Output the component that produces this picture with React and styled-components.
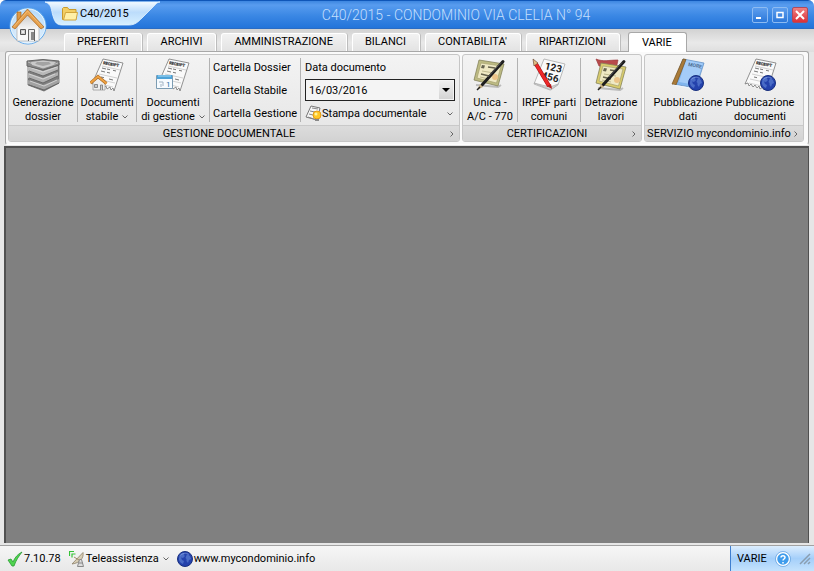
import { useState } from "react";
import styled, { createGlobalStyle, css } from "styled-components";

const GlobalStyle = createGlobalStyle`
    *, *::before, *::after {
        box-sizing: border-box;
    }

    body {
        margin: 0;
        color: #000;
        font: 11px/14px Roboto, Tahoma, sans-serif;
    }

    button, input {
        margin: 0;
        padding: 0;
        border: 0;
        background: none;
        color: inherit;
        font: inherit;
    }

    svg {
        display: block;
        flex: none;
    }
`;

const Window = styled.div`
    position: relative;
    display: flex;
    flex-direction: column;
    min-height: 100vh;
    border-radius: 6px 6px 0 0;
    background: #e6e6e6;
    overflow: hidden;
`;

/* title bar */

const TitleBar = styled.header`
    display: flex;
    height: 29px;
    padding: 0 6px 0 45px;
    border-top: 1px solid #0f56b8;
    border-bottom: 1px solid #2a6cc4;
    background: linear-gradient(#3d86e0, #589cef 15%, #3a87e4 55%, #2374da);
`;

const HomeButton = styled.button`
    position: absolute;
    top: 7px;
    left: 9px;
    z-index: 1;
    width: 38px;
    height: 38px;
`;

const QuickTab = styled.div`
    display: grid;
    width: 115px;
    height: 25px;

    > * {
        grid-area: 1 / 1;
    }
`;

const QuickButton = styled.button`
    display: flex;
    align-items: center;
    gap: 2px;
    padding-left: 17px;
`;

const WindowTitle = styled.h1`
    flex: 1;
    margin: 0;
    color: #c4dffd;
    font-size: 14px;
    font-weight: 300;
    line-height: 28px;
    text-align: center;
`;

const WindowButtons = styled.div`
    display: flex;
    align-items: center;
    gap: 4px;
`;

const WindowButton = styled.button`
    display: grid;
    place-items: center;
    width: 16px;
    height: 16px;
    border: 1px solid ${({ $close }) => ($close ? "#b04a5c" : "#8dbbf2")};
    border-radius: 2px;
    background: ${({ $close }) =>
        $close ? "linear-gradient(#f08080, #dc3038)" : "linear-gradient(#5d9eee, #2c78da)"};
`;

/* tabs */

const Tabs = styled.nav`
    display: flex;
    align-items: flex-end;
    gap: 5px;
    height: 23px;
    padding-left: 64px;
    background: linear-gradient(#d2d2d2, #e9e9e9 60%, #dedede);
`;

const Tab = styled.button`
    height: 19px;
    padding: 0 13px 2px 12px;
    border: 1px solid #fff;
    border-bottom: 0;
    border-radius: 3px 3px 0 0;
    background: linear-gradient(#f2f2f2, #e2e2e2);
    box-shadow: 1px 0 0 #bdbdbd;
    line-height: 16px;
    white-space: nowrap;

    ${({ $active }) =>
        $active &&
        css`
            z-index: 1;
            height: 20px;
            margin-left: 3px;
            padding: 0 14px 0 13px;
            border: 1px solid #a8a8a8;
            border-bottom: 0;
            background: #fff;
            box-shadow: none;
            line-height: 19px;
        `}
`;

/* ribbon */

const Ribbon = styled.section`
    display: flex;
    gap: 2px;
    margin: -1px 5px 1px;
    padding: 2px;
    border: 1px solid #a8a8a8;
    border-bottom-color: #fff;
    border-radius: 3px;
    background: #fafafa;
`;

const Group = styled.div`
    display: flex;
    flex-direction: column;
    border: 1px solid #c6c6c6;
    border-radius: 3px;
    background: linear-gradient(#f3f3f3, #e5e5e5);
    overflow: hidden;
`;

const GroupBody = styled.div`
    display: flex;
    height: 70px;
    padding: ${({ $inset }) => ($inset ? "0 7px" : "0")};
`;

const GroupTitle = styled.div`
    display: flex;
    align-items: center;
    height: 16px;
    padding: 0 2px;
    border-top: 1px solid #c9c9c9;
    background: linear-gradient(#dcdcdc, #d2d2d2);

    span {
        flex: 1;
        text-align: center;
        white-space: nowrap;
    }
`;

const MoreButton = styled.button`
    display: grid;
    place-items: center;
    width: 10px;
    height: 14px;
`;

const Divider = styled.div`
    width: 1px;
    margin: 3px 0;
    background: #b2b2b2;
`;

const LargeButton = styled.button`
    display: flex;
    flex-direction: column;
    align-items: center;
    gap: 4px;
    width: ${({ $width }) => $width}px;
    padding-top: 3px;
    white-space: nowrap;
`;

const Line = styled.span`
    display: flex;
    align-items: center;
    gap: 4px;
`;

const Labels = styled.div`
    display: flex;
    flex-direction: column;
    align-items: center;
`;

const Column = styled.div`
    display: flex;
    flex-direction: column;
    width: ${({ $width }) => $width}px;
    padding: 1px 4px 0 ${({ $pad }) => $pad || 3}px;
    line-height: 23px;
    white-space: nowrap;
`;

const LinkButton = styled.button`
    height: 23px;
    text-align: left;
`;

const Combo = styled.div`
    display: flex;
    height: 22px;
    margin-bottom: 1px;
    padding: 1px;
    border: 1px solid #222;
    background: #f4f4f4;

    input {
        flex: 1;
        min-width: 0;
        padding-left: 2px;
        outline: none;
    }

    button {
        display: grid;
        place-items: center;
        width: 14px;
        background: linear-gradient(#f0f0f0, #d4d4d4);
    }
`;

const PrintButton = styled.button`
    display: flex;
    align-items: center;
    height: 23px;
    padding-right: 2px;

    span {
        flex: 1;
        text-align: left;
    }
`;

/* work area and status bar */

const Workspace = styled.main`
    flex: 1;
    margin: 0 5px 0 4px;
    border: 1px solid #505050;
    border-width: 2px 1px 0 2px;
    background: #808080;
`;

const StatusBar = styled.footer`
    display: flex;
    height: 26px;
    margin-top: 2px;
    border-top: 1px solid #a2a2a2;
    background: linear-gradient(#f6f6f6, #e8e8e8);
`;

const StatusItems = styled.div`
    display: flex;
    flex: 1;
    align-items: center;
    gap: 8px;
    padding-left: 7px;
`;

const StatusItem = styled.button`
    display: flex;
    align-items: center;
    gap: 1px;
`;

const StatusLink = styled.a`
    display: flex;
    align-items: center;
    gap: 1px;
    color: inherit;
    text-decoration: none;
`;

const StatusPane = styled.div`
    display: flex;
    align-items: center;
    gap: 8px;
    width: 84px;
    padding-left: 6px;
    border-left: 1px solid #3f7fd0;
    background: linear-gradient(#ddeefe, #a4cffa 50%, #c4e2fd);
`;

/* icons */

const Chevron = ({ right }) => (
    <svg width="6" height="6" viewBox="0 0 6 6" fill="none" stroke="#666">
        <path d={right ? "M1.500 .5L4 3 1.500 5.500" : "M.5 1.500L3 4 5.500 1.500"} />
    </svg>
);

const HomeIcon = () => (
    <svg width="38" height="38" viewBox="0 0 38 38">
        <defs>
            <radialGradient id="orb" cx=".5" cy=".7" r=".6">
                <stop offset="0" stopColor="#fff" />
                <stop offset="1" stopColor="#b9dcfa" />
            </radialGradient>
            <linearGradient id="wall" x2="0" y2="1">
                <stop offset="0" stopColor="#c8c8c8" />
                <stop offset=".6" stopColor="#fafafa" />
            </linearGradient>
        </defs>
        <circle cx="19" cy="19" r="18" fill="url(#orb)" stroke="#5aa5ea" />
        <circle cx="19" cy="19" r="17" fill="none" stroke="#e8f5ff" />
        <path d="M8 17L18 7 30 18V34H8z" fill="url(#wall)" stroke="#aaa" strokeWidth=".7" />
        <path d="M8 5h4v8l-4 4z" fill="#dc9945" stroke="#a7641c" strokeWidth=".7" />
        <path d="M3 20L18.500 2 35 20l-3 2L18.500 8 6 22z" fill="#e6a04c" stroke="#a7641c" strokeWidth=".7" />
        <path d="M5 19.500L18.500 4 33 19.500" fill="none" stroke="#f5c27c" strokeWidth=".8" />
        <path d="M11.500 22.500h5v5h-5z" fill="#ccc" stroke="#555" />
        <path d="M13 24h2v2h-2z" fill="#eee" />
        <path d="M19.500 34V22.500h6V34" fill="#eee" stroke="#666" />
        <path d="M22 25h3v8h-3z" fill="#888" />
    </svg>
);

const TabShape = () => (
    <svg width="115" height="25" viewBox="0 0 115 25">
        <defs>
            <linearGradient id="tabFill" x2="0" y2="1">
                <stop offset="0" stopColor="#f2f9ff" />
                <stop offset=".45" stopColor="#bcdcfb" />
                <stop offset="1" stopColor="#d6f0ff" />
            </linearGradient>
        </defs>
        <path d="M0 1C7 3 6 9 8 15C10 22 12 24 18 24H84C90 24 93 21 97 17L108 6C111 3 112 1 115 1z" fill="url(#tabFill)" stroke="#e4f4ff" strokeWidth=".8" />
    </svg>
);

const FolderIcon = () => (
    <svg width="16" height="14" viewBox="0 0 16 14">
        <path d="M.5 12.500v-11l1-1h4l1.500 2h7v10z" fill="#f3cf63" stroke="#c99a2c" />
        <path d="M3.500 5.500h12l-1.500 7.500H1.500z" fill="#fff0a6" stroke="#d2a63c" />
    </svg>
);

const StackIcon = () => (
    <svg width="34" height="34" viewBox="0 0 34 34" strokeLinejoin="round">
        <path d="M2 6l15 5 16-6v20l-15 8L2 27z" fill="#7d7d7d" stroke="#696969" strokeWidth=".8" />
        <path d="M2 22l15 5 16-6v4l-15 7-16-6z" fill="#a2a2a2" />
        <path d="M2 15l15 5 15-6v4l-15 7-15-5z" fill="#b0b0b0" />
        <path d="M2 8l15 5 15-5v4l-15 6-15-5z" fill="#b8b8b8" />
        <path d="M3 20l14 5 15-7M3 27l15 5 15-7M3 13l14 5 15-6" fill="none" stroke="#686868" />
        <path d="M3 16l14 5 12-5M3 9l14 5 14-5M4 23l14 5 13-6" fill="none" stroke="#ddd" strokeWidth=".8" />
        <path d="M1 3l16-1.500L33 3v4l-16 5L1 8z" fill="#888" stroke="#666" />
        <path d="M5 4l12-1.500L30 4l-3 3-10 3L6 7z" fill="#c9c9c9" />
        <path d="M11 4h12l2 2-8 2-8-2z" fill="#a3a3a3" />
        <path d="M2 4l15 6 15-5" fill="none" stroke="#ccc" strokeWidth=".8" />
    </svg>
);

const Globe = () => (
    <>
        <circle cx="8" cy="8" r="7.500" fill="#2442ac" stroke="#19307f" />
        <path d="M2.500 4.500c1-2 3-3 5-2L7 4l1 1-2 2-2-.5L5 9l2 1-1 3C3 12 1.500 9 2 7zM10 3l3 2 1 3-2 1-1 3-1.500-2V8L8.500 7z" fill="#4a6cc6" />
        <path d="M3.500 4.500c2-2.500 6-3 8.500-1" fill="none" stroke="#b5cbf5" opacity=".4" />
    </>
);

const Receipt = () => (
    <>
        <path d="M13 1l20 4-9 28-1-3-2 2-1-3-3 2-1-3-2 2-2-3-2 2-2-3-2 2-1-3-3 1z" fill="#fafafa" stroke="#777" strokeWidth=".8" />
        <text x="13" y="6" transform="rotate(11 13 6)" fontSize="4" fontWeight="700" fill="#333" stroke="#333" strokeWidth=".2">RECEIPT</text>
        <path d="M12 10l4 1m1 0l3 .7m3 .6l3 .7M11 13l4 1m2 .3l3 .7m-1 6l4 1m-12-3l3 .7" fill="none" stroke="#777" />
        <path d="M12 8l18 4M9 16l18 4M7 21l18 4M6 25l17 4" stroke="#b5b5b5" strokeWidth=".6" />
    </>
);

const ReceiptIcon = ({ badge }) => (
    <svg width="34" height="34" viewBox="0 0 34 34">
        <Receipt />
        {badge === "home" && (
            <>
                <path d="M3 24l5-5 7 5v8H3z" fill="#eee" stroke="#999" strokeWidth=".8" />
                <path d="M.5 25L8 18.500 16.500 25.500" fill="none" stroke="#a9651e" strokeWidth="3" />
                <path d="M.5 25L8 18.500 16.500 25.500" fill="none" stroke="#eda142" strokeWidth="2" />
                <path d="M4.500 26.500h3v3h-3zM10.500 32v-5h2v5" fill="#ccc" stroke="#777" strokeWidth=".8" />
            </>
        )}
        {badge === "calendar" && (
            <>
                <path d="M.5 17.500h16v13H.5z" fill="#f6fbff" stroke="#7c9cb2" />
                <path d="M1 17h15v4H1z" fill="#4ea3d8" />
                <path d="M2 18h13" stroke="#a9dbf6" />
                <path d="M3 24h4v4M5 26v3" fill="none" stroke="#9fb2c2" />
                <text x="10" y="29" fontSize="8" fill="#286fa6">1</text>
            </>
        )}
        {badge === "globe" && (
            <g transform="translate(17 17)">
                <Globe />
            </g>
        )}
    </svg>
);

const CertificateIcon = ({ stamp }) => (
    <svg width="34" height="34" viewBox="0 0 34 34">
        {stamp && <path d="M2 1c7 3 13 1 22 1l-2 9L5 8z" fill="#b84a4c" stroke="#9c3c3f" strokeWidth=".7" />}
        <g transform={stamp ? "translate(1 3)" : undefined}>
            <path d="M3 27l22 2 3-2" fill="none" stroke="#888" opacity=".5" strokeWidth="2" />
            <path d="M6 2l25 4-6 22L1 22z" fill={stamp ? "#d9cc6c" : "#bdbb83"} stroke="#85835a" strokeWidth=".8" />
            <path d="M8 5l20 3-4.500 17L4 20z" fill="#efe9c4" stroke="#a5a070" strokeWidth=".7" />
            <path d="M9 7l3 .5-1 3-3-.5z" fill="#666450" />
            <path d="M15 9l7 1M8 16l8 2" stroke="#66634d" strokeWidth="1.500" />
            <path d="M9 13l12 2M7 19l9 2" stroke="#b2ac80" strokeWidth=".8" />
            <circle cx="22" cy="19" r="3" fill="#ecc489" />
        </g>
        <path d="M9 27L30 3.500" stroke="#1d1d1d" strokeWidth="3" strokeLinecap="round" />
        <path d="M15 19L28 4.500" stroke="#666" strokeWidth=".8" />
        <path d="M4 32l3-6 3 3z" fill="#c7b083" />
        <path d="M4 32l3-3" stroke="#222" strokeWidth="1.500" />
    </svg>
);

const NumbersIcon = () => (
    <svg width="34" height="34" viewBox="0 0 34 34">
        <path d="M12 1l21 5-7 21-8 5L2 26z" fill="#fafafa" stroke="#aaa" strokeWidth=".8" />
        <path d="M2 25l16 4 8-3-7 6z" fill="#d5d5d5" stroke="#aaa" strokeWidth=".7" />
        <g transform="rotate(13 12 12)" fontSize="10" fontWeight="700" fill="#222">
            <text x="12" y="11">123</text>
            <text x="11" y="21">456</text>
        </g>
        <path d="M4 6L17 28" stroke="#a00b10" strokeWidth="4" />
        <path d="M4 6L17 28" stroke="#ed2929" strokeWidth="3" />
        <path d="M1 1l5 4-4 3z" fill="#e5bd84" stroke="#5b3a24" strokeWidth=".6" />
        <path d="M15 28l4-2 1 5z" fill="#b51a1a" />
    </svg>
);

const NotebookIcon = () => (
    <svg width="34" height="34" viewBox="0 0 34 34">
        <path d="M12 1l21 4-8 25-23-4z" fill="#81b5ed" stroke="#6a96c8" strokeWidth=".8" />
        <path d="M15 2l17 3.500-7 21.500-17-3z" fill="#a4ccf8" />
        <path d="M12 1l3 .5L5 27l-4-1z" fill="#a97a38" stroke="#79521d" strokeWidth=".7" />
        <path d="M2 27l22 4 3-3" fill="none" stroke="#eef6ff" />
        <text x="17" y="8" transform="rotate(10 17 8)" fontSize="5" fontWeight="700" fill="#4f6f94">MORE</text>
        <g transform="translate(17 17)">
            <Globe />
        </g>
    </svg>
);

const PrintIcon = () => (
    <svg width="17" height="17" viewBox="0 0 17 17">
        <path d="M6 1l9 2-3 12-11-3z" fill="#f7f7f7" stroke="#777" />
        <path d="M7 3l6 1M5 6l5 1M4 9l4 1M3 12l6 2" stroke="#888" />
        <circle cx="12" cy="10" r="4" fill="#ffc928" stroke="#e49a16" />
        <circle cx="11" cy="9" r="1.500" fill="#fff2a0" />
        <path d="M10 15h4" stroke="#888" strokeWidth="2" />
    </svg>
);

const CheckIcon = () => (
    <svg width="16" height="16" viewBox="0 0 16 16">
        <path d="M1 9l3-1 2 3c2-5 5-8 9-10-3 4-6 8-8 14H5z" fill="#4fd44f" stroke="#2a9a34" strokeWidth=".8" />
    </svg>
);

const AntennaIcon = () => (
    <svg width="16" height="16" viewBox="0 0 16 16" fill="none">
        <path d="M.5 5V.5H5M3 6.500V3h3.500" stroke="#36c338" strokeWidth="1.200" />
        <path d="M14 1.500C15 7 11 12 3 13z" fill="#d8cdb4" stroke="#8b806a" strokeWidth=".8" />
        <path d="M5 6l5 3" stroke="#a08d66" />
        <path d="M8.500 15.500l2-7h2l2 7zM10 12h4" fill="#ddd" stroke="#888" />
    </svg>
);

const HelpIcon = () => (
    <svg width="16" height="16" viewBox="0 0 16 16">
        <circle cx="8" cy="8" r="6.500" fill="#3f9cec" stroke="#fff" strokeWidth="1.500" />
        <circle cx="8" cy="8" r="7.500" fill="none" stroke="#5a9bdc" strokeWidth=".7" />
        <path d="M6 6.500c0-2.500 4-2.500 4 0 0 1.500-2 1.500-2 3M8 11v1.500" fill="none" stroke="#fff" strokeWidth="1.500" />
    </svg>
);

const TABS = ["PREFERITI", "ARCHIVI", "AMMINISTRAZIONE", "BILANCI", "CONTABILITA'", "RIPARTIZIONI", "VARIE"];

const RibbonButton = ({ icon, lines, menu, width }) => (
    <LargeButton $width={width}>
        {icon}
        <Labels>
            <Line>{lines[0]}</Line>
            <Line>
                {lines[1]}
                {menu && <Chevron />}
            </Line>
        </Labels>
    </LargeButton>
);

const RibbonGroup = ({ title, inset, children }) => (
    <Group>
        <GroupBody $inset={inset}>{children}</GroupBody>
        <GroupTitle>
            <span>{title}</span>
            <MoreButton aria-label={title}><Chevron right /></MoreButton>
        </GroupTitle>
    </Group>
);

export default function App() {
    const [tab, setTab] = useState("VARIE");
    const [date, setDate] = useState("16/03/2016");

    return (
        <Window>
            <GlobalStyle />
            <HomeButton aria-label="Menu"><HomeIcon /></HomeButton>
            <TitleBar>
                <QuickTab>
                    <TabShape />
                    <QuickButton><FolderIcon />C40/2015</QuickButton>
                </QuickTab>
                <WindowTitle>C40/2015 - CONDOMINIO VIA CLELIA N° 94</WindowTitle>
                <WindowButtons>
                    <WindowButton aria-label="Riduci">
                        <svg width="10" height="10"><path d="M1 8h5" stroke="#fff" strokeWidth="2" /></svg>
                    </WindowButton>
                    <WindowButton aria-label="Ingrandisci">
                        <svg width="8" height="8"><path d="M1 1.500h6v5H1z" fill="none" stroke="#fff" strokeWidth="1.500" /></svg>
                    </WindowButton>
                    <WindowButton $close aria-label="Chiudi">
                        <svg width="10" height="10"><path d="M1 1l8 8M9 1L1 9" stroke="#fff" strokeWidth="2" /></svg>
                    </WindowButton>
                </WindowButtons>
            </TitleBar>
            <Tabs>
                {TABS.map(name => (
                    <Tab key={name} $active={name === tab} onClick={() => setTab(name)}>{name}</Tab>
                ))}
            </Tabs>
            <Ribbon>
                <RibbonGroup title="GESTIONE DOCUMENTALE">
                    <RibbonButton width={68} icon={<StackIcon />} lines={["Generazione", "dossier"]} />
                    <Divider />
                    <RibbonButton width={58} icon={<ReceiptIcon badge="home" />} lines={["Documenti", "stabile"]} menu />
                    <Divider />
                    <RibbonButton width={72} icon={<ReceiptIcon badge="calendar" />} lines={["Documenti", "di gestione"]} menu />
                    <Divider />
                    <Column $width={90}>
                        <LinkButton>Cartella Dossier</LinkButton>
                        <LinkButton>Cartella Stabile</LinkButton>
                        <LinkButton>Cartella Gestione</LinkButton>
                    </Column>
                    <Divider />
                    <Column $width={158} $pad={4}>
                        <label htmlFor="date">Data documento</label>
                        <Combo>
                            <input id="date" value={date} onChange={e => setDate(e.target.value)} />
                            <button aria-label="Scegli data">
                                <svg width="8" height="4"><path d="M0 0h8L4 4z" /></svg>
                            </button>
                        </Combo>
                        <PrintButton><PrintIcon /><span>Stampa documentale</span><Chevron /></PrintButton>
                    </Column>
                </RibbonGroup>
                <RibbonGroup title="CERTIFICAZIONI">
                    <RibbonButton width={54} icon={<CertificateIcon />} lines={["Unica -", "A/C - 770"]} />
                    <Divider />
                    <RibbonButton width={62} icon={<NumbersIcon />} lines={["IRPEF parti", "comuni"]} />
                    <Divider />
                    <RibbonButton width={60} icon={<CertificateIcon stamp />} lines={["Detrazione", "lavori"]} />
                </RibbonGroup>
                <RibbonGroup title="SERVIZIO mycondominio.info" inset>
                    <RibbonButton width={72} icon={<NotebookIcon />} lines={["Pubblicazione", "dati"]} />
                    <RibbonButton width={72} icon={<ReceiptIcon badge="globe" />} lines={["Pubblicazione", "documenti"]} />
                </RibbonGroup>
            </Ribbon>
            <Workspace />
            <StatusBar>
                <StatusItems>
                    <StatusItem><CheckIcon />7.10.78</StatusItem>
                    <StatusItem><AntennaIcon /><Line>Teleassistenza<Chevron /></Line></StatusItem>
                    <StatusLink href="#">
                        <svg width="16" height="16" viewBox="0 0 16 16"><Globe /></svg>
                        www.mycondominio.info
                    </StatusLink>
                </StatusItems>
                <StatusPane>
                    <span>VARIE</span>
                    <HelpIcon />
                    <svg width="12" height="12" viewBox="0 0 12 12">
                        <path d="M1 11L11 1M5 11l6-6M9 11l2-2" stroke="#8a9eb0" strokeWidth="1.500" />
                    </svg>
                </StatusPane>
            </StatusBar>
        </Window>
    );
}
